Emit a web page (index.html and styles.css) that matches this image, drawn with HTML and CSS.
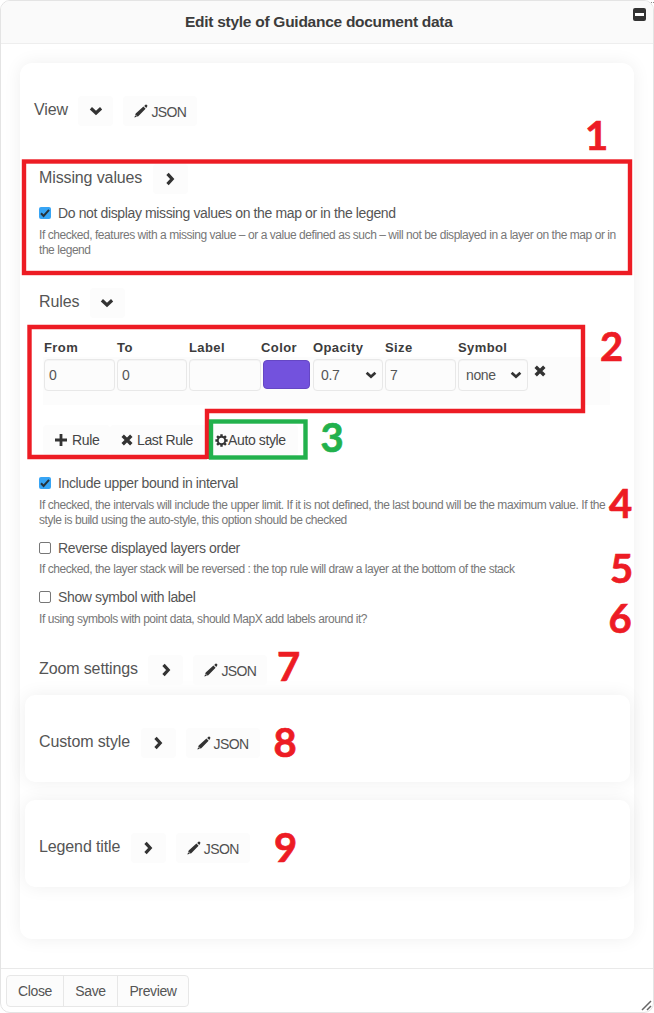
FILE: index.html
```html
<!DOCTYPE html>
<html lang="en">
<head>
<meta charset="utf-8">
<title>Edit style of Guidance document data</title>
<link rel="stylesheet" href="styles.css">
</head>
<body>
<svg class="defs" width="0" height="0">
  <symbol id="down" viewBox="0 0 14 14"><path d="M1.9 4.3 L7 9 L12.1 4.3" fill="none" stroke="currentColor" stroke-width="3.2"/></symbol>
  <symbol id="right" viewBox="0 0 14 14"><path d="M4.5 1.9 L9.2 7 L4.5 12.1" fill="none" stroke="currentColor" stroke-width="3.2"/></symbol>
  <symbol id="pencil" viewBox="0 0 14 14"><path d="M0.4 13.6 L1.7 9.6 L9.4 2.6 L11.6 4.8 L4.3 12.3 Z M10.2 1.9 L11.4 .8 Q12.2 .2 13 1 Q13.8 1.8 13.2 2.6 L12.3 4 Z" fill="currentColor"/><path d="M1.6 11.2 L2.8 12.5" stroke="#fff" stroke-width="1"/></symbol>
  <symbol id="cross" viewBox="0 0 12 12"><path d="M1.7 1.7 L10.3 10.3 M10.3 1.7 L1.7 10.3" stroke="currentColor" stroke-width="3.4"/></symbol>
  <symbol id="plus" viewBox="0 0 12 12"><path d="M6 0 V12 M0 6 H12" stroke="currentColor" stroke-width="2.8"/></symbol>
  <symbol id="gear" viewBox="0 0 14 14"><circle cx="7" cy="7" r="4" fill="none" stroke="currentColor" stroke-width="2.1"/><path d="M7 .4 V2.8 M7 11.2 V13.6 M.4 7 H2.8 M11.2 7 H13.6 M2.2 2.2 L4 4 M10 10 L11.8 11.8 M11.8 2.2 L10 4 M4 10 L2.2 11.8" stroke="currentColor" stroke-width="2.6"/></symbol>
  <symbol id="check" viewBox="0 0 12 12"><path d="M2 6.2 L4.6 9 L10 2.8" fill="none" stroke="#26333d" stroke-width="2"/></symbol>
</svg>
<div class="window">
  <header class="header">
    <h1 class="title">Edit style of Guidance document data</h1>
    <button class="minimize" aria-label="Minimize"></button>
  </header>
  <main class="main">
    <div class="panel">
      <div class="row row-view"><span class="name">View</span><button class="btn toggle"><svg><use href="#down"/></svg></button><button class="btn json"><svg><use href="#pencil"/></svg><span>JSON</span></button></div>
      <section class="block missing">
        <div class="row"><span class="name">Missing values</span><button class="btn toggle"><svg><use href="#right"/></svg></button></div>
        <label class="option"><i class="box on"><svg><use href="#check"/></svg></i><span>Do not display missing values on the map or in the legend</span></label>
        <p class="help">If checked, features with a missing value – or a value defined as such – will not be displayed in a layer on the map or in<br>the legend</p>
      </section>
      <section class="block rules">
        <div class="row"><span class="name">Rules</span><button class="btn toggle"><svg><use href="#down"/></svg></button></div>
        <div class="grid heads"><b>From</b><b>To</b><b>Label</b><b class="color-head">Color</b><b>Opacity</b><b>Size</b><b>Symbol</b></div>
        <div class="grid fields">
          <span class="field">0</span><span class="field">0</span><span class="field"></span><span class="swatch"></span>
          <span class="field select">0.7<svg><use href="#down"/></svg></span><span class="field">7</span><span class="field select">none<svg><use href="#down"/></svg></span>
          <svg class="remove"><use href="#cross"/></svg>
        </div>
        <div class="actions">
          <button class="btn add"><svg><use href="#plus"/></svg><span>Rule</span></button>
          <button class="btn last"><svg><use href="#cross"/></svg><span>Last Rule</span></button>
          <button class="btn auto"><svg><use href="#gear"/></svg><span>Auto style</span></button>
        </div>
      </section>
      <section class="block options">
        <label class="option"><i class="box on"><svg><use href="#check"/></svg></i><span>Include upper bound in interval</span></label>
        <p class="help two">If checked, the intervals will include the upper limit. If it is not defined, the last bound will be the maximum value. If the<br>style is build using the auto-style, this option should be checked</p>
        <label class="option"><i class="box"></i><span>Reverse displayed layers order</span></label>
        <p class="help one">If checked, the layer stack will be reversed : the top rule will draw a layer at the bottom of the stack</p>
        <label class="option"><i class="box"></i><span>Show symbol with label</span></label>
        <p class="help">If using symbols with point data, should MapX add labels around it?</p>
      </section>
      <div class="row row-zoom"><span class="name">Zoom settings</span><button class="btn toggle"><svg><use href="#right"/></svg></button><button class="btn json"><svg><use href="#pencil"/></svg><span>JSON</span></button></div>
      <div class="card"><div class="row"><span class="name">Custom style</span><button class="btn toggle"><svg><use href="#right"/></svg></button><button class="btn json"><svg><use href="#pencil"/></svg><span>JSON</span></button></div></div>
      <div class="card"><div class="row"><span class="name">Legend title</span><button class="btn toggle"><svg><use href="#right"/></svg></button><button class="btn json"><svg><use href="#pencil"/></svg><span>JSON</span></button></div></div>
    </div>
  </main>
  <footer class="footer"><div class="group"><button>Close</button><button>Save</button><button>Preview</button></div></footer>
</div>
<svg class="notes" viewBox="0 0 654 1013">
  <g fill="none" stroke="#ed1c24" stroke-width="4.4">
    <rect x="24" y="161.5" width="606" height="111.5"/>
    <path d="M207 457 H29.5 V327 H583 V411 H207 V459"/>
    <rect x="211" y="421.5" width="94.5" height="36" stroke="#22b14c"/>
  </g>
  <g class="digits">
    <text x="585" y="150">1</text><text x="600" y="361">2</text><text class="green" x="320.5" y="452">3</text>
    <text x="609" y="518">4</text><text x="610" y="583">5</text><text x="608.5" y="633">6</text>
    <text x="277" y="681">7</text><text x="273.5" y="757">8</text><text x="274" y="862">9</text>
  </g>
  <path d="M642 1010 L651 1001 M647 1010 L651 1006" stroke="#666" stroke-width="1.5"/>
  <path d="M651 2.5 H654" stroke="#888" stroke-dasharray="1 1"/>
</svg>
</body>
</html>
```

FILE: styles.css
```css
* { box-sizing: border-box; }
body { margin: 0; background: #fff; color: #333; font: 14px "Liberation Sans", Arial, sans-serif; letter-spacing: -.37px; overflow: hidden; }
button { font: inherit; letter-spacing: inherit; color: inherit; padding: 0; border: 0; background: none; }
svg { display: block; flex: none; }
.defs { position: absolute; }

.window { width: 654px; height: 1013px; border: 1px solid #e4e4e4; border-radius: 10px; display: flex; flex-direction: column; overflow: hidden; }
.header { height: 43px; flex: none; display: flex; justify-content: space-between; background: #fafafa; border-bottom: 1px solid #eee; padding: 7px 7px 0 184px; }
.title { margin: 4px 0 0; font-size: 15.5px; letter-spacing: -.27px; line-height: 19px; white-space: nowrap; color: #3c3c3c; }
.minimize { width: 13px; height: 13px; border-radius: 2px; border: solid #333; border-width: 5px 2px; background: #fff; }
.main { flex: 1; padding: 19px 19px 0; overflow: hidden; }
.panel { height: 876px; border-radius: 12px; background: #fff; box-shadow: 0 0 18px rgba(0,0,0,.065); padding: 33px 4px 0 5px; }

.row { display: flex; height: 30px; padding-left: 14px; }
.name { font-size: 16px; letter-spacing: -.12px; line-height: 28px; color: #555; margin-right: 10.5px; white-space: nowrap; }
.btn { height: 30px; display: flex; align-items: center; background: #fcfcfc; border-radius: 4px; color: #333; white-space: nowrap; }
.toggle { width: 35px; justify-content: center; }
.toggle svg { width: 14px; height: 14px; }
.json { width: 74px; margin-left: 10px; padding-left: 11px; gap: 3px; color: #333; }
.json svg { width: 14px; height: 14px; }
.json span { letter-spacing: -.6px; color: #505050; padding-top: 1px; }
.row-view { padding-left: 9px; margin-bottom: 38px; }

.block { padding-left: 14px; }
.block .row { padding-left: 0; }
.missing { height: 124px; }
.option { display: flex; align-items: center; gap: 7px; height: 16px; color: #555; white-space: nowrap; }
.missing .option { margin-top: 11px; }
.box { width: 12px; height: 12px; border: 1px solid #777; border-radius: 2px; }
.box.on { border: 0; background: #37a5f5; }
.box svg { width: 12px; height: 12px; }
.help { margin: 7px 0 0; font-size: 12px; letter-spacing: -.45px; line-height: 15px; color: #777; white-space: nowrap; }

.rules { height: 187px; }
.grid { display: grid; grid-template-columns: 71px 70px 72px 48px 70px 71px 70px 16px; column-gap: 2px; padding-left: 1px; margin-left: 4px; }
.heads { height: 18px; margin-top: 21px; font-size: 13px; line-height: 18px; letter-spacing: .4px; color: #3c3c3c; }
.color-head { margin-left: -2px; }
.fields { height: 48px; width: 567px; padding-top: 2px; background: #fcfcfc; }
.field { height: 32px; border: 1px solid #e8e8e8; border-radius: 4px; padding-left: 4px; line-height: 30px; color: #555; box-shadow: inset 0 1px 1px rgba(0,0,0,.03); }
.select { display: flex; justify-content: space-between; align-items: center; padding: 0 5px 0 7px; }
.select svg { width: 12px; height: 12px; color: #333; }
.swatch { width: 47px; height: 29px; margin-top: 1px; border: 1px solid #6547c4; border-radius: 4px; background: #7352dd; }
.remove { width: 12px; height: 12px; margin: 6px 0 0 4px; }
.actions { display: flex; margin: 20px 0 0 4px; }
.actions svg { width: 12px; height: 12px; }
.actions .btn { gap: 5px; color: #333; }
.actions span { color: #444; }
.add { width: 67px; padding-left: 12px; }
.last { width: 99px; padding-left: 11px; }
.actions .last { gap: 4px; }
.actions .auto { padding: 0 12px 0 6px; gap: 0; }
.auto svg { width: 13px; height: 13px; }

.options { height: 180px; }
.options .two { margin-bottom: 12px; }
.options .one { margin-top: 6px; margin-bottom: 12px; }
.row-zoom { margin-bottom: 10px; }
.card { height: 87px; margin-bottom: 18px; padding-top: 33px; border-radius: 10px; background: #fff; box-shadow: 0 0 18px rgba(0,0,0,.065); }

.footer { height: 44px; flex: none; border-top: 1px solid #e9e9e9; padding: 6px 5px; }
.group { display: inline-flex; height: 32px; border: 1px solid #e7e7e7; border-radius: 4px; background: #fcfcfc; color: #555; }
.group button { width: 54px; border-left: 1px solid #e7e7e7; }
.group button:first-child { width: 56px; border: 0; }
.group button:last-child { width: 71px; }

.notes { position: absolute; left: 0; top: 0; width: 654px; height: 1013px; pointer-events: none; }
.digits { font: bold 40px Lato, sans-serif; letter-spacing: 0; fill: #ed1c24; stroke: #ed1c24; stroke-width: .7; }
.digits .green { fill: #22b14c; stroke: #22b14c; }
```
